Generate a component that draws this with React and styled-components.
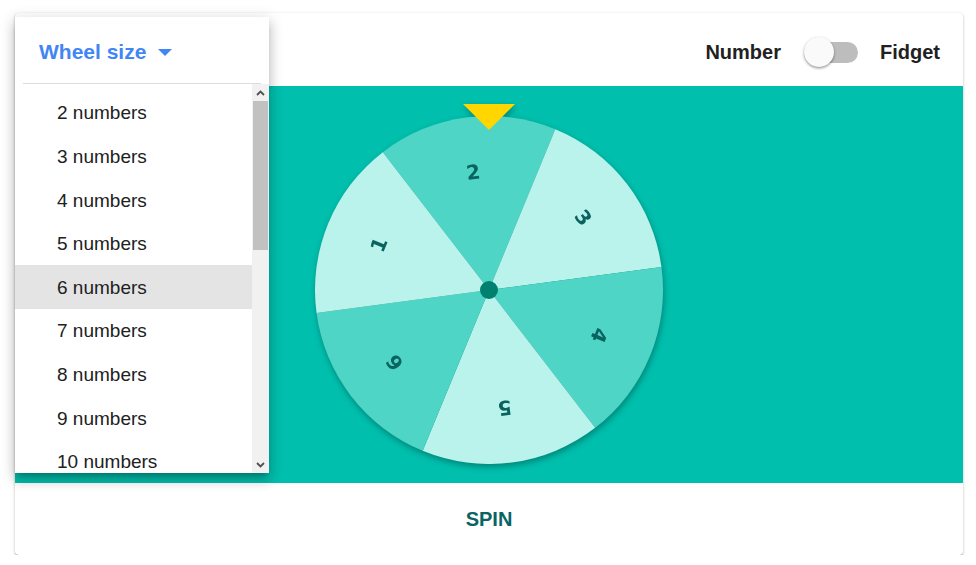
import React from "react";
import styled, { createGlobalStyle } from "styled-components";

const GlobalStyle = createGlobalStyle`
  body {
    margin: 0;
    background: #ffffff;
    font-family: "Liberation Sans", Arial, sans-serif;
  }
`;

const sizes = [2, 3, 4, 5, 6, 7, 8, 9, 10];

const C = 175;
const R = 174;
const OFFSET = -7.6;
const segments = [
  { label: "2", dark: true },
  { label: "3", dark: false },
  { label: "4", dark: true },
  { label: "5", dark: false },
  { label: "6", dark: true },
  { label: "1", dark: false },
];

const point = (deg, r) => {
  const a = (deg * Math.PI) / 180;
  return [C + r * Math.sin(a), C - r * Math.cos(a)];
};

const slicePath = (mid) => {
  const [x1, y1] = point(mid - 30, R);
  const [x2, y2] = point(mid + 30, R);
  return `M${C},${C} L${x1},${y1} A${R},${R} 0 0 1 ${x2},${y2} Z`;
};

export default function App() {
  return (
    <>
      <GlobalStyle />
      <Page>
        <Card>
          <TopBar>
            <ToggleLabel>Number</ToggleLabel>
            <Switch>
              <Thumb />
            </Switch>
            <ToggleLabel>Fidget</ToggleLabel>
          </TopBar>

          <Stage>
            <WheelWrap>
              <Pointer />
              <svg width="350" height="350" viewBox="0 0 350 350">
                {segments.map((s, i) => {
                  const mid = OFFSET + i * 60;
                  return (
                    <g key={s.label}>
                      <path d={slicePath(mid)} fill={s.dark ? "#4fd5c6" : "#baf3ec"} />
                      <text
                        x={C}
                        y={C - 119}
                        transform={`rotate(${mid} ${C} ${C})`}
                        textAnchor="middle"
                        dominantBaseline="central"
                        fill="#0b6360"
                        fontSize="20"
                        fontWeight="700"
                        fontFamily="'DejaVu Sans', 'Liberation Sans', sans-serif"
                      >
                        {s.label}
                      </text>
                    </g>
                  );
                })}
                <circle cx={C} cy={C} r="9" fill="#00806f" />
              </svg>
            </WheelWrap>
          </Stage>

          <Footer>
            <SpinButton>SPIN</SpinButton>
          </Footer>

          <Menu>
            <MenuHeader>
              <MenuTitle>Wheel size</MenuTitle>
              <Caret />
            </MenuHeader>
            <Divider />
            <MenuBody>
              <ItemList>
                {sizes.map((n) => (
                  <Item key={n} selected={n === 6}>
                    {n} numbers
                  </Item>
                ))}
              </ItemList>
              <ScrollTrack>
                <ScrollButton>
                  <svg width="9" height="6" viewBox="0 0 9 6">
                    <path d="M1 5 L4.5 1.5 L8 5" stroke="#505050" strokeWidth="1.8" fill="none" />
                  </svg>
                </ScrollButton>
                <ScrollThumb />
                <ScrollSpacer />
                <ScrollButton>
                  <svg width="9" height="6" viewBox="0 0 9 6">
                    <path d="M1 1 L4.5 4.5 L8 1" stroke="#505050" strokeWidth="1.8" fill="none" />
                  </svg>
                </ScrollButton>
              </ScrollTrack>
            </MenuBody>
          </Menu>
        </Card>
      </Page>
    </>
  );
}

const Page = styled.div`
  padding: 13px 13px 0 15px;
`;

const Card = styled.div`
  position: relative;
  width: 948px;
  background: #ffffff;
  border-radius: 4px;
  box-shadow: 0 1px 3px rgba(0, 0, 0, 0.25), 0 1px 1px rgba(0, 0, 0, 0.14),
    0 2px 1px -1px rgba(0, 0, 0, 0.12);
  display: flex;
  flex-direction: column;
`;

const TopBar = styled.div`
  height: 73px;
  box-sizing: border-box;
  padding: 5px 23px 0 0;
  display: flex;
  justify-content: flex-end;
  align-items: center;
  gap: 22px;
`;

const ToggleLabel = styled.span`
  font-size: 20px;
  font-weight: 700;
  color: #212121;
`;

const Switch = styled.div`
  position: relative;
  width: 54px;
  height: 21px;
  border-radius: 11px;
  background: #bdbdbd;
  margin-left: 1px;
`;

const Thumb = styled.div`
  position: absolute;
  left: 0;
  top: -5px;
  width: 30px;
  height: 30px;
  border-radius: 50%;
  background: #fafafa;
  box-shadow: 0 1px 3px rgba(0, 0, 0, 0.3), 0 2px 2px rgba(0, 0, 0, 0.14);
`;

const Stage = styled.div`
  height: 397px;
  box-sizing: border-box;
  background: #00bfad;
  display: flex;
  justify-content: center;
  padding-top: 29px;
`;

const WheelWrap = styled.div`
  position: relative;
  width: 350px;
  height: 350px;
  filter: drop-shadow(1px 3px 3px rgba(0, 0, 0, 0.3));

  svg {
    display: block;
  }
`;

const Pointer = styled.div`
  position: absolute;
  top: -11px;
  left: 50%;
  transform: translateX(-50%);
  width: 0;
  height: 0;
  border-left: 26px solid transparent;
  border-right: 26px solid transparent;
  border-top: 26px solid #ffd600;
  z-index: 1;
`;

const Footer = styled.div`
  height: 72px;
  display: flex;
  align-items: center;
  justify-content: center;
`;

const SpinButton = styled.button`
  border: none;
  background: transparent;
  font-family: "Liberation Sans", Arial, sans-serif;
  font-size: 20px;
  font-weight: 700;
  color: #0a6463;
  padding: 6px 16px;
`;

const Menu = styled.div`
  position: absolute;
  top: 4px;
  left: 0;
  width: 254px;
  height: 456px;
  background: #ffffff;
  box-shadow: 0 5px 5px -3px rgba(0, 0, 0, 0.2), 0 8px 10px 1px rgba(0, 0, 0, 0.14),
    0 3px 14px 2px rgba(0, 0, 0, 0.12);
  display: flex;
  flex-direction: column;
  z-index: 2;
`;

const MenuHeader = styled.div`
  height: 66px;
  box-sizing: border-box;
  padding: 3px 0 0 24px;
  display: flex;
  align-items: center;
  gap: 12px;
`;

const MenuTitle = styled.span`
  font-size: 21px;
  font-weight: 700;
  color: #4285f4;
`;

const Caret = styled.span`
  width: 0;
  height: 0;
  border-left: 7.5px solid transparent;
  border-right: 7.5px solid transparent;
  border-top: 7px solid #4285f4;
  margin-top: 2px;
`;

const Divider = styled.div`
  height: 1px;
  margin: 0 8px;
  background: #dcdcdc;
`;

const MenuBody = styled.div`
  flex: 1;
  display: flex;
  overflow: hidden;
`;

const ItemList = styled.div`
  flex: 1;
  overflow: hidden;
  padding-top: 6.6px;
`;

const Item = styled.div`
  height: 43.6px;
  display: flex;
  align-items: center;
  padding: 2px 0 0 42px;
  box-sizing: border-box;
  font-size: 19px;
  color: #212121;
  background: ${(p) => (p.selected ? "#e4e4e4" : "transparent")};
`;

const ScrollTrack = styled.div`
  width: 17px;
  background: #f1f1f1;
  display: flex;
  flex-direction: column;
`;

const ScrollButton = styled.div`
  height: 17px;
  display: flex;
  align-items: center;
  justify-content: center;
`;

const ScrollThumb = styled.div`
  height: 149px;
  margin: 0 1px;
  background: #c1c1c1;
`;

const ScrollSpacer = styled.div`
  flex: 1;
`;
